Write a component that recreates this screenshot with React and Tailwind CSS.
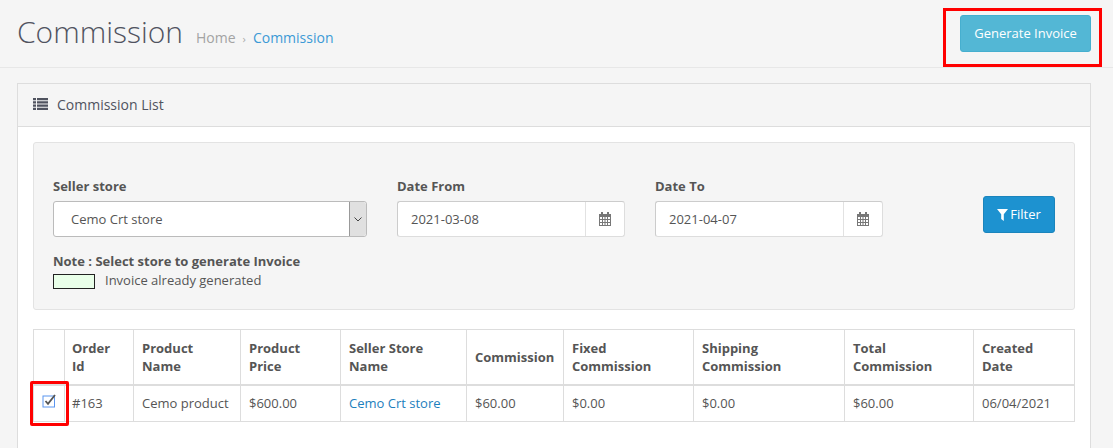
import React from 'react';

const columns = [
  { label: ['Order', 'Id'], width: 'w-[69px]', pad: 'pl-[7px]', value: '#163' },
  { label: ['Product', 'Name'], width: 'w-[107px]', pad: 'pl-[8px]', value: 'Cemo product' },
  { label: ['Product', 'Price'], width: 'w-[100px]', pad: 'pl-[8px]', value: '$600.00' },
  { label: ['Seller Store', 'Name'], width: 'w-[126px]', pad: 'pl-[8px]', value: 'Cemo Crt store', link: true },
  { label: ['Commission'], width: 'w-[97px]', pad: 'pl-[8px]', value: '$60.00' },
  { label: ['Fixed', 'Commission'], width: 'w-[130px]', pad: 'pl-[8px]', value: '$0.00' },
  { label: ['Shipping', 'Commission'], width: 'w-[151px]', pad: 'pl-[8px]', value: '$0.00' },
  { label: ['Total', 'Commission'], width: 'w-[129px]', pad: 'pl-[8px]', value: '$60.00' },
  { label: ['Created', 'Date'], width: 'w-[102px]', pad: 'pl-[8px]', value: '06/04/2021' },
];

function CalendarIcon() {
  return (
    <svg width="12" height="14" viewBox="0 0 12 14" fill="#777">
      <path d="M2 0h2v2H2zM8 0h2v2H8z" />
      <path fillRule="evenodd" d="M0 2h12v12H0zM1 5v2h2V5zm3 0v2h1.500V5zm2.500 0v2H8V5zM9 5v2h2V5zM1 8v2h2V8zm3 0v2h1.500V8zm2.500 0v2H8V8zM9 8v2h2V8zM1 11v2h2v-2zm3 0v2h1.500v-2zm2.500 0v2H8v-2zM9 11v2h2v-2z" />
    </svg>
  );
}

function DateField({ label, value }) {
  return (
    <div className="w-[228px]">
      <div className="text-[13px] font-bold text-[#555] leading-[18px] mb-[6px]">{label}</div>
      <div className="flex h-[36px] bg-white border border-[#ddd] rounded-[3px] border-t-[#ccc] border-l-[#ccc]">
        <div className="flex-1 flex items-center pl-[13px] pt-[2px] text-[13px] text-[#555] border-r border-[#e2e2e2]">{value}</div>
        <div className="w-[38px] flex items-center justify-center"><CalendarIcon /></div>
      </div>
    </div>
  );
}

export default function App() {
  return (
    <div className="relative w-[1113px] h-[448px] overflow-hidden bg-[#f5f5f5] font-['Open_Sans',sans-serif] text-[13px] text-[#555]">
      {/* Page header */}
      <div className="flex items-center justify-between h-[68px] border-b border-[#e7e7e7] pl-[17px] pr-[22px]">
        <div className="flex items-baseline mb-[4px]">
          <h1 className="text-[30px] font-light text-[#50535f] leading-[40px]">Commission</h1>
          <span className="ml-[13px] text-[14px] text-[#a3a3a3]">Home</span>
          <span className="ml-[7px] mr-[7px] text-[11px] text-[#aaa]">›</span>
          <span className="text-[14px] text-[#3c9ad6]">Commission</span>
        </div>
        <button className="w-[131px] h-[37px] bg-[#53b7d5] border border-[#46afcf] rounded-[3px] text-white text-[13px]">Generate Invoice</button>
      </div>

      {/* Panel */}
      <div className="mt-[15px] ml-[17px] w-[1074px] h-[400px] bg-white border border-[#ddd]">
        <div className="flex items-center h-[43px] pl-[15px] pb-[2px] bg-[#f5f5f5] border-b border-[#ddd] text-[14px] text-[#50535f]">
          <svg width="15" height="12" viewBox="0 0 15 12" fill="#50535f" className="mr-[9px]">
            <path d="M0 0h3v2.200H0zM4 0h11v2.200H4zM0 3.200h3v2.200H0zM4 3.200h11v2.200H4zM0 6.500h3v2.200H0zM4 6.500h11v2.200H4zM0 9.700h3V12H0zM4 9.700h11V12H4z" />
          </svg>
          Commission List
        </div>

        <div className="px-[15px] pt-[15px]">
          {/* Filter box */}
          <div className="h-[168px] bg-[#f5f5f5] border border-[#e3e3e3] rounded-[3px] pt-[34px] pl-[19px]">
            <div className="flex">
              <div className="w-[344px]">
                <div className="text-[13px] font-bold text-[#555] leading-[18px] mb-[6px]">Seller store</div>
                <div className="flex w-[314px] h-[36px] bg-white border border-[#bbb] rounded-[3px]">
                  <div className="flex-1 flex items-center pl-[17px] pt-[2px] text-[13px] text-[#555]">Cemo Crt store</div>
                  <div className="w-[17px] flex items-center justify-center bg-[#e0e0e0] border-l border-[#999] rounded-r-[3px]">
                    <svg width="8" height="5" viewBox="0 0 8 5" fill="none" stroke="#444" strokeWidth="1"><path d="M0.500 0.500L4 4L7.500 0.500" /></svg>
                  </div>
                </div>
              </div>
              <div className="mr-[30px]"><DateField label="Date From" value="2021-03-08" /></div>
              <DateField label="Date To" value="2021-04-07" />
              <button className="flex items-center justify-center w-[72px] h-[37px] mt-[19px] ml-[100px] bg-[#1d92d0] border border-[#1a84bc] rounded-[3px] text-white text-[13px]">
                <svg width="11" height="12" viewBox="0 0 11 12" fill="#fff" className="mr-[2px]"><path d="M0 0h11L6.800 5.200V12L4.200 10V5.200z" /></svg>
                Filter
              </button>
            </div>
            <div className="mt-[15px] text-[13px] font-bold text-[#555] leading-[18px]">Note : Select store to generate Invoice</div>
            <div className="flex items-center h-[20px] mt-[1px]">
              <span className="w-[42px] h-[15px] bg-[#e9ffe9] border border-[#222]"></span>
              <span className="ml-[10px] text-[#555]">Invoice already generated</span>
            </div>
          </div>

          {/* Commission table */}
          <div className="mt-[19px] w-[1042px] border border-[#ddd]">
            <div className="flex h-[56px] border-b-2 border-[#ddd]">
              <div className="w-[30px] shrink-0"></div>
              {columns.map((col) => (
                <div key={col.label.join(' ')} className={`${col.width} ${col.pad} shrink-0 border-l border-[#ddd] flex flex-col justify-center text-[13px] font-bold leading-[18px]`}>
                  {col.label.map((line) => <div key={line}>{line}</div>)}
                </div>
              ))}
            </div>
            <div className="flex h-[35px]">
              <div className="w-[30px] shrink-0 flex justify-center pt-[8px]">
                <svg width="14" height="14" viewBox="0 0 14 14" fill="none">
                  <rect x="1" y="2" width="11.500" height="11" stroke="#5b96f0" strokeWidth="1" fill="#fff" />
                  <path d="M3.500 7L6 9.800L13 1" stroke="#555" strokeWidth="1.800" />
                </svg>
              </div>
              {columns.map((col) => (
                <div key={col.label.join(' ')} className={`${col.width} ${col.pad} shrink-0 border-l border-[#ddd] flex items-center text-[13px] ${col.link ? 'text-[#1d80bd]' : ''}`}>
                  {col.value}
                </div>
              ))}
            </div>
          </div>
        </div>
      </div>

      {/* Red annotations */}
      <div className="absolute left-[943px] top-[8px] w-[159px] h-[59px] border-[3px] border-[#f00]"></div>
      <div className="absolute left-[30px] top-[381px] w-[39px] h-[45px] border-[3px] border-[#f00] rounded-[2px]"></div>
    </div>
  );
}
